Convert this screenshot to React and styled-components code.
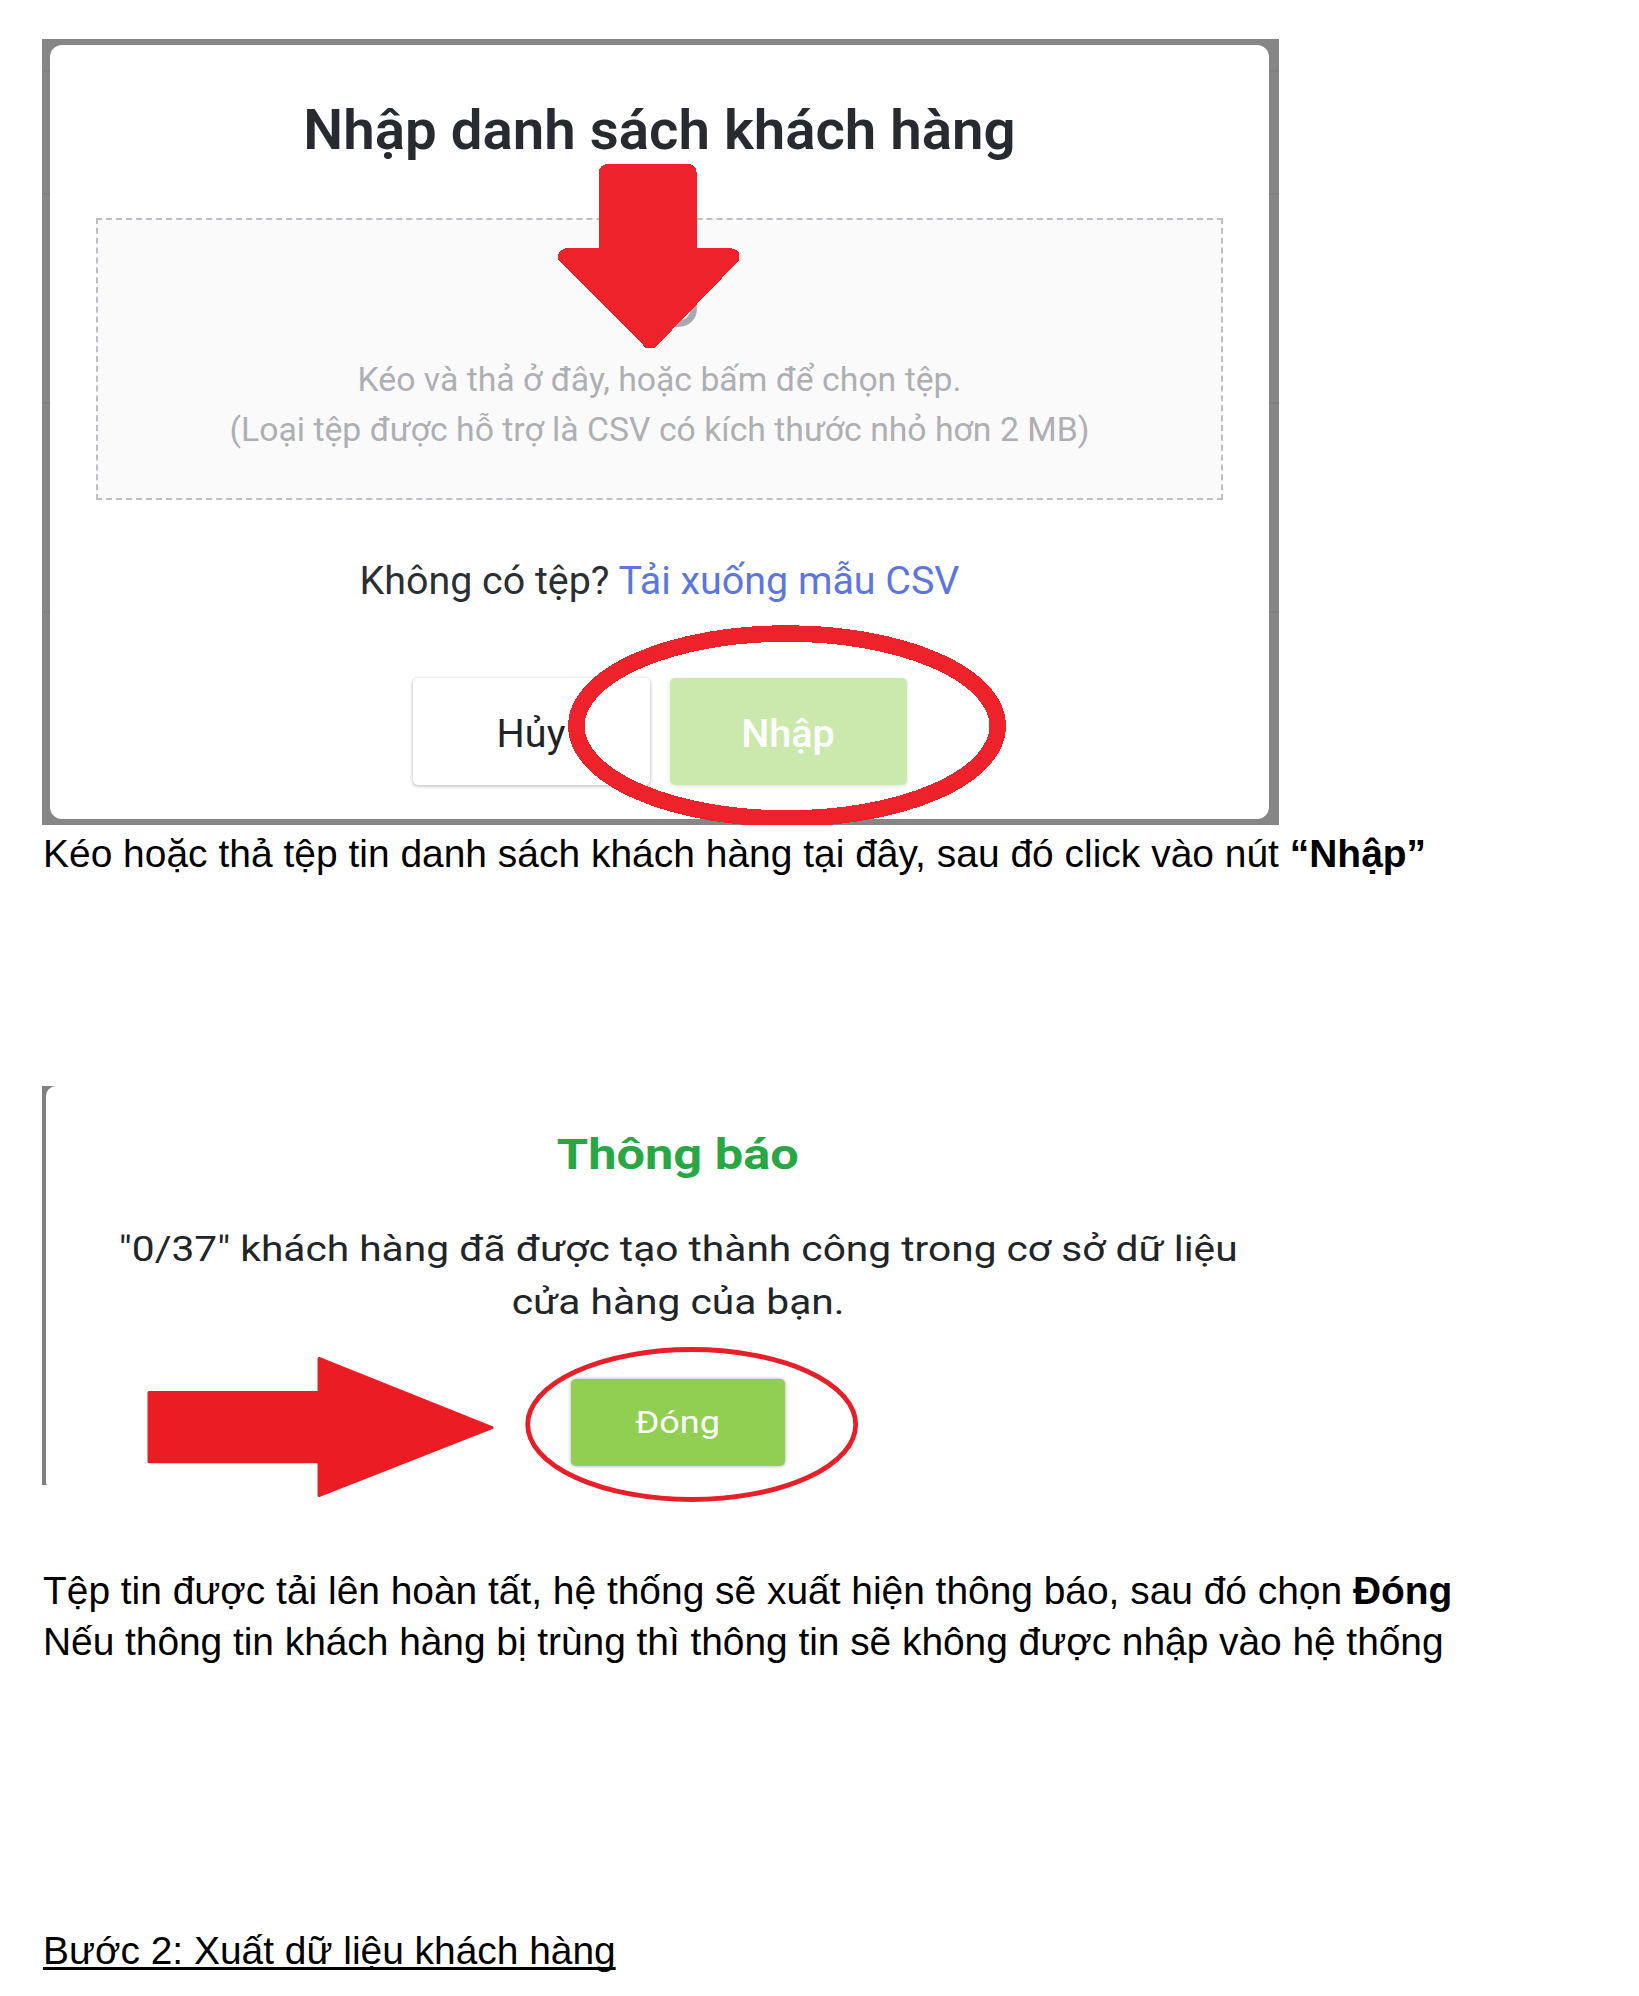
import React from "react";
import styled, { createGlobalStyle } from "styled-components";

const GlobalStyle = createGlobalStyle`
  * { box-sizing: border-box; }
  body { margin: 0; background: #fff; }
`;

const Page = styled.main`
  display: flex;
  flex-direction: column;
  align-items: flex-start;
  width: 1639px;
  height: 1996px;
  padding: 39px 0 0 42px;
  overflow: hidden;
  background: #fff;
`;

const Paragraph = styled.p`
  margin: ${(p) => p.$gap}px 0 0 1px;
  font: 400 38.9px/51px "Liberation Sans", Arial, sans-serif;
  letter-spacing: ${(p) => p.$tracking || 0}px;
  color: #000;
  white-space: pre;
`;

const StepHeading = styled(Paragraph).attrs({ as: "h2" })`
  text-decoration: underline;
  text-decoration-thickness: 2.5px;
  text-underline-offset: 2.5px;
  text-decoration-skip-ink: none;
`;

const ImportFigure = styled.section`
  position: relative;
  width: 1237px;
  height: 786px;
  padding: 6px 10px 6px 8px;
  overflow: hidden;
  background-color: #868686;
  background-image: linear-gradient(#7f7f7f, #7f7f7f), linear-gradient(#7f7f7f, #7f7f7f),
    linear-gradient(#7f7f7f, #7f7f7f), linear-gradient(#7f7f7f, #7f7f7f);
  background-size: 100% 2px;
  background-position: 0 31px, 0 154px, 0 363px, 0 572px;
  background-repeat: no-repeat;
`;

const ImportDialog = styled.div`
  display: flex;
  flex-direction: column;
  height: 774px;
  padding: 52px 46px 0;
  border-radius: 12px;
  background: #fff;
  font-family: Roboto, sans-serif;
  text-align: center;
`;

const DialogTitle = styled.h1`
  margin: 0;
  font-size: 56.4px;
  font-weight: 600;
  line-height: 66px;
  color: #272a2f;
`;

const DropZone = styled.div`
  display: flex;
  flex-direction: column;
  align-items: center;
  height: 282px;
  margin-top: 55px;
  padding-top: 47px;
  border: 2px dashed #bdbec8;
  background: #fafafb;
`;

const DropText = styled.p`
  margin: 28px 0 0;
  font-size: 33.75px;
  line-height: 50px;
  color: #aeafb3;
  white-space: nowrap;
`;

const Hint = styled.p`
  margin: 56px 0 0;
  font-size: 39.4px;
  line-height: 50px;
  color: #2b2e33;
`;

const Link = styled.a`
  color: #5b76df;
`;

const Actions = styled.div`
  display: flex;
  justify-content: center;
  gap: 20px;
  margin-top: 72px;
`;

const Button = styled.button`
  width: 237px;
  height: 107px;
  padding: 3px 0 0;
  border: 0;
  border-radius: 5px;
  font-family: Roboto, sans-serif;
  font-size: 39.6px;
`;

const CancelButton = styled(Button)`
  background: #fff;
  color: #212329;
  box-shadow: 0 1px 3px 1px rgba(0, 0, 0, 0.2);
`;

const SubmitButton = styled(Button)`
  background: #cbe9ad;
  color: #fff;
  font-weight: 500;
  box-shadow: 0 1px 3px 1px rgba(0, 0, 0, 0.08);
`;

const Overlay = styled.svg`
  position: absolute;
  top: 0;
  left: 0;
  overflow: visible;
  pointer-events: none;
`;

const NoticeFigure = styled.section`
  position: relative;
  width: 1272px;
  height: 399px;
  margin-top: 207px;
  padding-left: 4px;
  background: linear-gradient(to right, #808080 14px, #fff 14px);
`;

const NoticeDialog = styled.div`
  display: flex;
  flex-direction: column;
  align-items: center;
  height: 399px;
  padding: 44px 4px 0 0;
  border-radius: 10px 0 0 2px;
  background: #fff;
  font-family: Roboto, sans-serif;
`;

const Wide = styled.span`
  display: inline-block;
  transform: scaleX(${(p) => p.$x});
  white-space: nowrap;
`;

const NoticeTitle = styled.h2`
  margin: 0;
  font-size: 43.4px;
  font-weight: 700;
  line-height: 50px;
  color: #2aa745;
`;

const NoticeText = styled.p`
  display: flex;
  flex-direction: column;
  align-items: center;
  margin: 43px 0 0;
  font-size: 35.5px;
  line-height: 53px;
  color: #212529;
`;

const CloseButton = styled(Button)`
  width: 214px;
  height: 87px;
  margin-top: 50px;
  padding: 0 0 1px;
  background: #90cf52;
  color: #fff;
  font-size: 31px;
  box-shadow: 0 0 3px 1px rgba(0, 0, 0, 0.2);
`;

function UploadIcon() {
  return (
    <svg width="74" height="60" viewBox="0 0 74 60" fill="none" stroke="#a7a9ae" strokeWidth="6.5">
      <path d="M37 56.7H55C65 56.7 70.7 50 70.7 41.5C70.7 34 65.5 28.500 59 27.500C57 17 48 10 38 12C30 13.500 25 20 25 27.500C17 28 14 35 15 42C16 51 22 56.700 30 56.700H37" />
    </svg>
  );
}

function ImportOverlay() {
  return (
    <Overlay width="1237" height="786" viewBox="42 39 1237 786" fill="#ed222a" shapeRendering="crispEdges">
      <path d="M607 164H689Q696.700 165 696.700 173V248H729Q739.300 249 739.300 255V260L655 347.700H645.700L559.500 261Q555.500 257 559.500 252.500Q563 248 568 248H599V173Q599 165 607 164Z" />
      <ellipse cx="787" cy="726" rx="210.700" ry="92.500" fill="none" stroke="#ed222a" strokeWidth="16.500" />
    </Overlay>
  );
}

function NoticeOverlay() {
  return (
    <Overlay width="1272" height="399" viewBox="42 1086 1272 399" fill="#ec1c24">
      <path
        d="M149 1392.500H319V1358.500L492 1427.700L319 1495.500V1461.800H149Z"
        stroke="#ec1c24"
        strokeWidth="3"
        strokeLinejoin="round"
      />
      <ellipse cx="691.700" cy="1424.500" rx="164" ry="75" fill="none" stroke="#e71f28" strokeWidth="4.800" />
    </Overlay>
  );
}

export default function App() {
  return (
    <>
      <GlobalStyle />
      <Page>
        <ImportFigure>
          <ImportDialog>
            <DialogTitle>Nhập danh sách khách hàng</DialogTitle>
            <DropZone>
              <UploadIcon />
              <DropText>
                Kéo và thả ở đây, hoặc bấm để chọn tệp.
                <br />
                (Loại tệp được hỗ trợ là CSV có kích thước nhỏ hơn 2 MB)
              </DropText>
            </DropZone>
            <Hint>
              Không có tệp? <Link>Tải xuống mẫu CSV</Link>
            </Hint>
            <Actions>
              <CancelButton>Hủy</CancelButton>
              <SubmitButton>Nhập</SubmitButton>
            </Actions>
          </ImportDialog>
          <ImportOverlay />
        </ImportFigure>

        <Paragraph $gap={3} $tracking={0.03}>
          Kéo hoặc thả tệp tin danh sách khách hàng tại đây, sau đó click vào nút <b>“Nhập”</b>
        </Paragraph>

        <NoticeFigure>
          <NoticeDialog>
            <NoticeTitle>
              <Wide $x={1.165}>Thông báo</Wide>
            </NoticeTitle>
            <NoticeText>
              <Wide $x={1.146}>"0/37" khách hàng đã được tạo thành công trong cơ sở dữ liệu</Wide>
              <Wide $x={1.146}>cửa hàng của bạn.</Wide>
            </NoticeText>
            <CloseButton>
              <Wide $x={1.16}>Đóng</Wide>
            </CloseButton>
          </NoticeDialog>
          <NoticeOverlay />
        </NoticeFigure>

        <Paragraph $gap={80}>
          Tệp tin được tải lên hoàn tất, hệ thống sẽ xuất hiện thông báo, sau đó chọn <b>Đóng</b>
        </Paragraph>
        <Paragraph $gap={0} $tracking={-0.03}>
          Nếu thông tin khách hàng bị trùng thì thông tin sẽ không được nhập vào hệ thống
        </Paragraph>
        <StepHeading $gap={258}>Bước 2: Xuất dữ liệu khách hàng</StepHeading>
      </Page>
    </>
  );
}
